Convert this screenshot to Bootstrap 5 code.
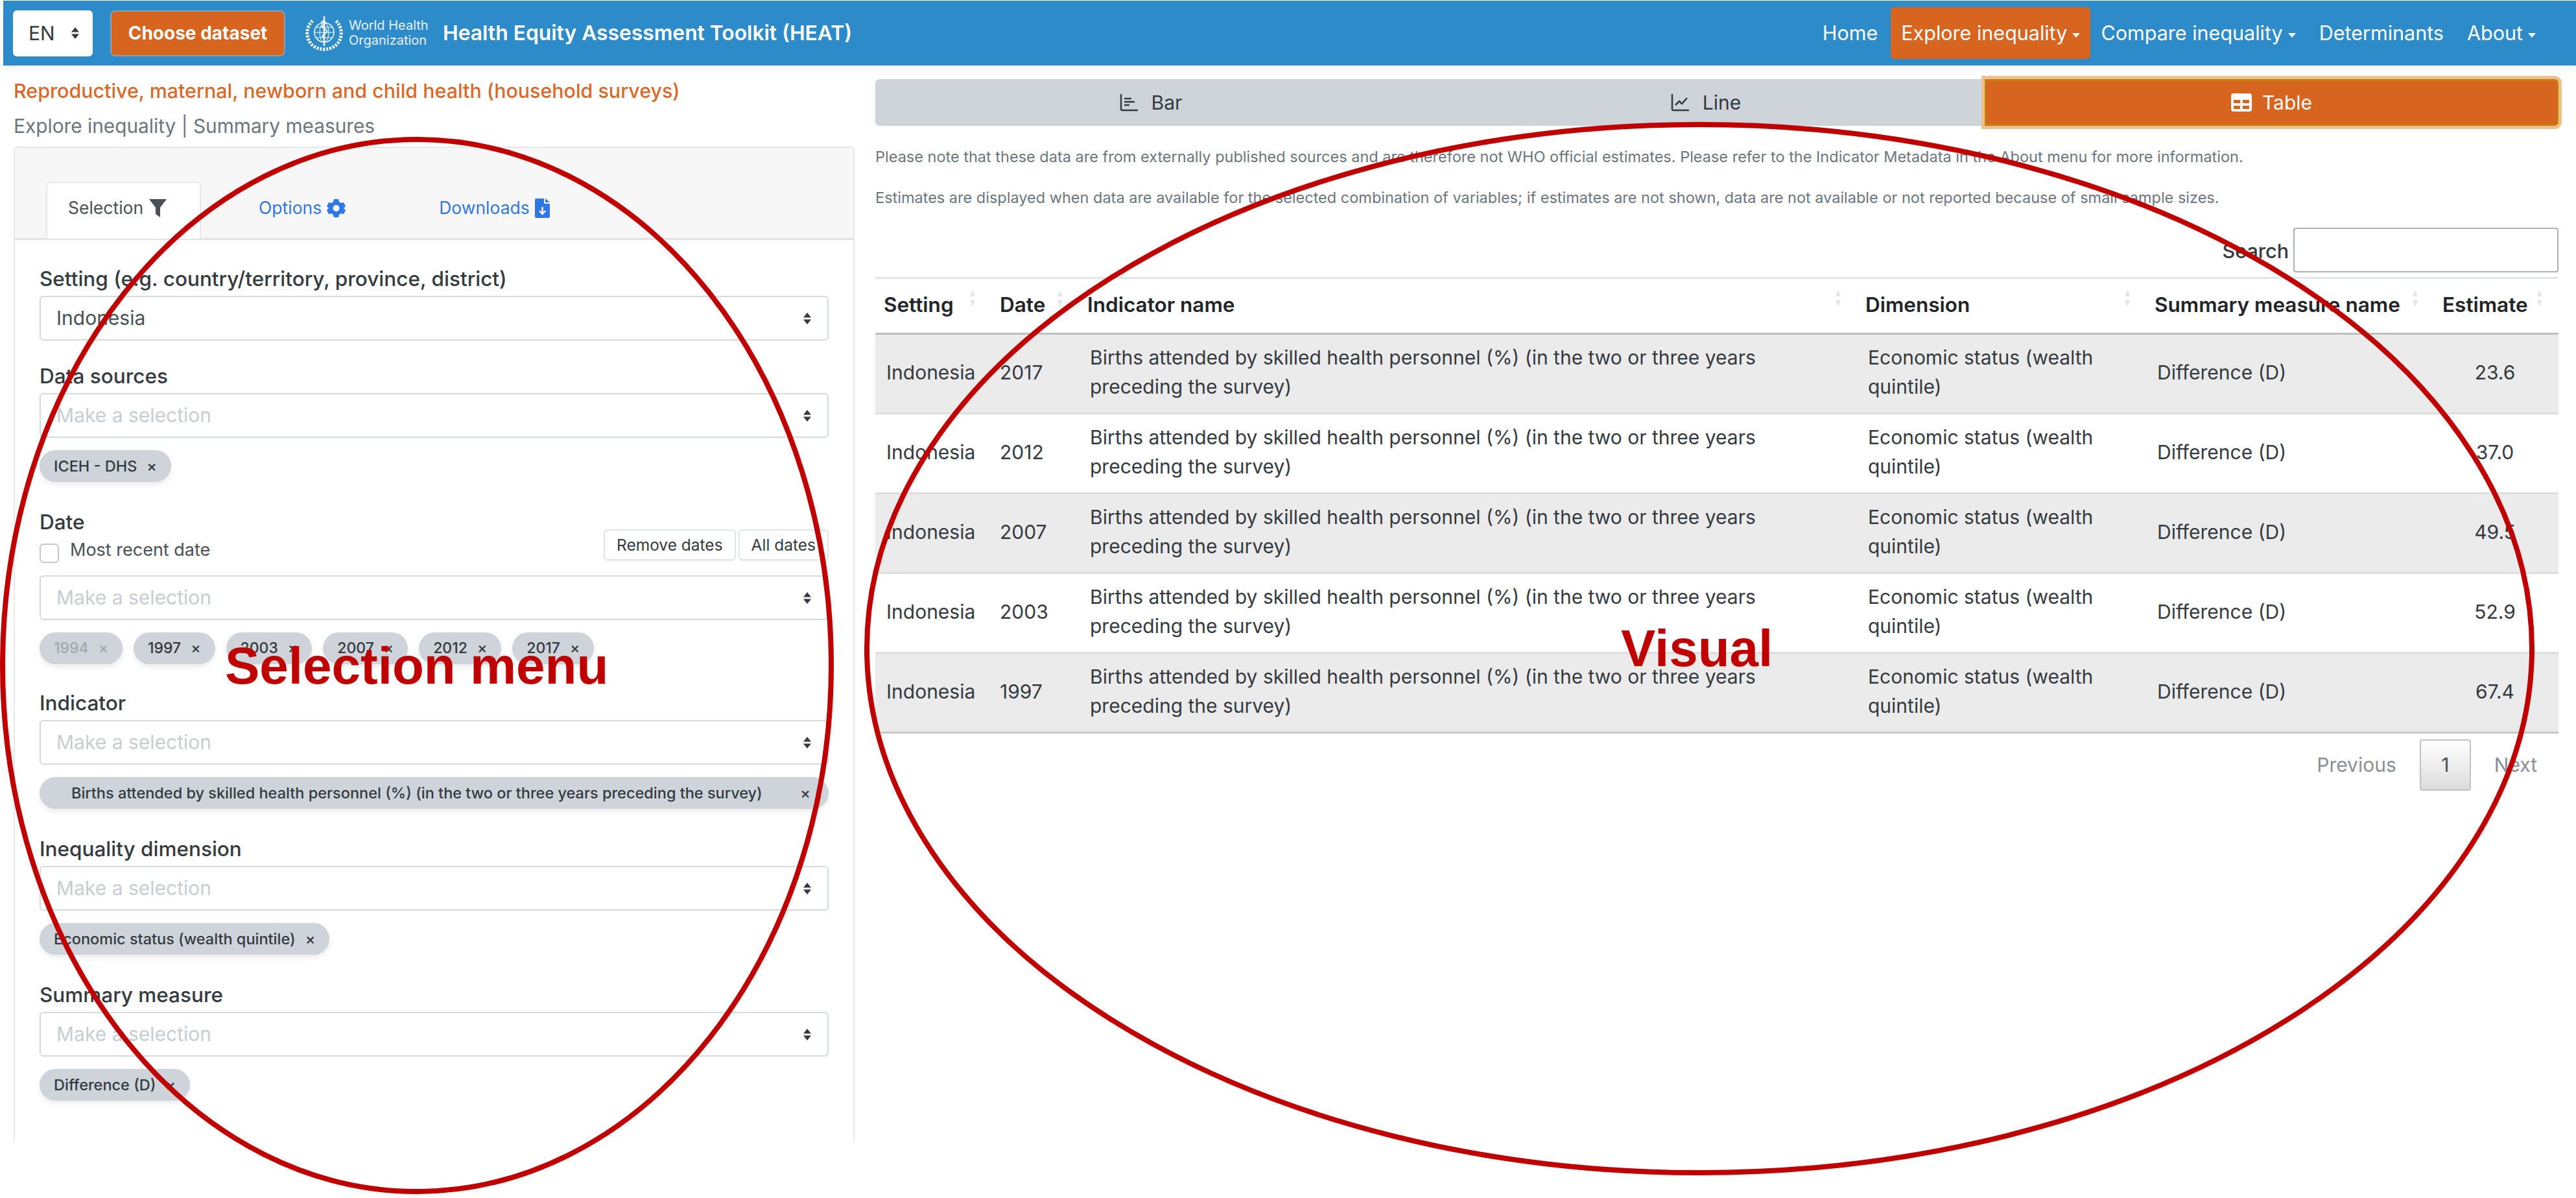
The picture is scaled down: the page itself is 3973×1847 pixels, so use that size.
<!DOCTYPE html>
<html lang="en">
<head>
  <meta charset="UTF-8">
  <title>Health Equity Assessment Toolkit (HEAT)</title>
  <link href="https://cdn.jsdelivr.net/npm/bootstrap@5.3.0/dist/css/bootstrap.min.css" rel="stylesheet">
  <style>
    html, body { height: 1847px; overflow: hidden; }
    body { position: relative; font-family: Inter, "Liberation Sans", sans-serif; font-size: 30px; color: #343a40; background: #fff; }

    /* top bar */
    .heat-bar { margin: 1px 0 0 5px; height: 100px; padding: 0 46px 0 15px; background: #2e8bc9; box-shadow: 0 4px 12px rgba(0,0,0,.07); }
    .lang-select { width: 123px; height: 71px; font-size: 30px; padding: 0 0 0 24px; border: 0; border-radius: 6px; color: #343a40; }
    .btn-dataset { width: 270px; height: 71px; margin-left: 27px; padding: 0; font-size: 28px; font-weight: 700; color: #fff; background: #d7641f; border: 2px solid #8fa0a8; border-radius: 8px; }
    .who-logo { width: 65px; height: 56px; margin-left: 28px; }
    .who-name { margin-left: 5px; width: 125px; font-size: 20px; line-height: 23px; color: #e6f1f8; }
    .heat-title { margin-left: 20px; font-size: 31.800px; font-weight: 600; color: #fff; }
    .navbar-expand.heat-bar .navbar-nav .nav-link { color: #fff; font-size: 30.500px; padding: 0 16px; height: 80px; line-height: 80px; border-radius: 6px; }
    .navbar-expand.heat-bar .navbar-nav .nav-link.active { background: #d7641f; color: #fff; }
    .heat-bar .dropdown-toggle::after { border-top: 7px solid; border-right: 6px solid transparent; border-left: 6px solid transparent; border-bottom: 0; margin-left: 8px; vertical-align: 4px; }

    /* left pane */
    .side-pane { width: 1340px; padding-left: 21px; padding-right: 22px; flex: none; }
    .data-title { margin-top: 20px; font-size: 30.400px; line-height: 39px; font-weight: 500; color: #d9692b; white-space: nowrap; }
    .data-sub { margin-top: 15px; font-size: 29.800px; line-height: 39px; color: #6c757d; }
    .pick-card { margin-top: 12px; border: 2px solid #e8e8e8; border-bottom: 0; border-radius: 6px 6px 0 0; }
    .pick-card .card-header { height: 142px; padding: 52px 0 0 48px; background: #f7f7f7; border-bottom: 3px solid #e2e3e5; }
    .pick-card .nav-tabs { margin: 0; border: 0; }
    .pick-card .nav-link { height: 88px; padding: 0 32px 8px; display: flex; align-items: center; gap: 8px; font-size: 26.500px; color: #2f77e6; border: 2px solid transparent; border-bottom: 0; }
    .pick-card .nav-link.active { padding-right: 50px; color: #495057; background: #fff; border-color: #e8e8e8; border-radius: 6px 6px 0 0; }
    .tab-gap-a { margin-left: 55px; }
    .tab-gap-b { margin-left: 76px; }
    .pick-card .card-body { padding: 40px 38px 64px 38px; }
    .fld { margin-bottom: 35px; }
    .fld-label { display: block; height: 40px; line-height: 40px; margin-bottom: 6px; font-size: 31.500px; font-weight: 500; color: #343a40; white-space: nowrap; }
    .heat-select { height: 69px; padding: 0 50px 0 24px; font-size: 30px; color: #495057; border: 2px solid #d5dae0; border-radius: 6px; background-size: 14px 20px; background-position: right 24px center;
      background-image: url("data:image/svg+xml,%3csvg xmlns='http://www.w3.org/2000/svg' viewBox='0 0 14 20'%3e%3cpath fill='%23343a40' d='M7 1l6 7.500H1zM7 19l-6-7.500h12z'/%3e%3c/svg%3e"); }
    .heat-select.is-empty { color: #c8cdd3; }
    .lang-select { background-size: 14px 20px; background-position: right 20px center; background-image: url("data:image/svg+xml,%3csvg xmlns='http://www.w3.org/2000/svg' viewBox='0 0 14 20'%3e%3cpath fill='%23343a40' d='M7 1l6 7.500H1zM7 19l-6-7.500h12z'/%3e%3c/svg%3e"); }
    .chip-row { display: flex; gap: 17px; margin-top: 19px; margin-bottom: 42px; }
    .chip-row.row-last { margin-bottom: 0; }
    .chip-row.row-dates { margin-bottom: 40px; }
    .chip-pill { display: inline-flex; align-items: center; justify-content: space-between; height: 49px; padding: 0 22px; gap: 15px; border-radius: 25px; background: #ced4da; font-size: 23.500px; font-weight: 500; color: #343a40; box-shadow: 0 4px 8px rgba(0,0,0,.08); white-space: nowrap; }
    .chip-pill.is-off { color: #a3a9af; }
    .row-dates .chip-pill { font-size: 23px; }
    .chip-wide { width: 100%; padding: 0 28px 0 49px; }
    .date-head { height: 96px; margin-bottom: 6px; }
    .recent-row { margin-top: 13px; }
    .form-check-input.recent-box { width: 30px; height: 30px; margin: 0; float: none; border: 2px solid #c2c8ce; border-radius: 6px; flex: none; }
    .recent-label { font-size: 27px; line-height: 30px; color: #495057; margin: -5px 0 0 17px; }
    .btn-dates { height: 48px; padding: 0 18px; font-size: 24.500px; color: #343a40; background: #fff; border: 2px solid #e2e5e8; border-radius: 6px; box-shadow: 0 2px 3px rgba(0,0,0,.05); margin-top: 31px; white-space: nowrap; }

    /* right pane */
    .main-pane { flex: 1; min-width: 0; margin-left: 10px; padding-right: 27px; padding-top: 21px; }
    .view-group { height: 72px; width: 100%; }
    .view-group .btn { font-size: 30px; color: #343a40; background: #ced4da; border: 0; display: flex; align-items: center; justify-content: center; gap: 20px; padding: 0; }
    .view-group .view-bar { flex: 0 0 851px; border-right: 1px solid #dde1e5; }
    .view-group .view-line { flex: 0 0 862px; }
    .view-group .view-table { flex: 1 1 0; gap: 16px; background: #d7641f; color: #fff; border: 3px solid #c87f0a; border-radius: 6px; box-shadow: 0 0 0 5px #edc08d; position: relative; z-index: 1; }
    .note-text { font-size: 23.500px; line-height: 30px; color: #6c757d; margin: 33px 0 0; white-space: nowrap; }
    .search-row { height: 69px; margin-top: 31px; }
    .search-row label { font-size: 30.500px; font-weight: 500; margin-right: 7px; margin-top: 3px; }
    .search-box { width: 409px; height: 69px; border: 2px solid #adb0b3; border-radius: 4px; padding: 0 10px; }
    .heat-table { table-layout: fixed; width: 100%; margin: 7px 0 0; border-top: 3px solid #e4e7ea; font-size: 30px; color: #343a40; }
    .heat-table th { height: 86px; padding: 0 0 4px 13px; vertical-align: middle; font-size: 31.500px; font-weight: 600; color: #212529; border-bottom: 3px solid #bdbfc1; white-space: nowrap; }
    .heat-table td { height: 123px; padding: 0 10px 4px 17px; line-height: 45px; vertical-align: middle; border-bottom: 3px solid #dedede; border-top: 0; }
    .heat-table tbody tr:nth-child(odd) td { background: #ebebeb; }
    .heat-table tbody tr:last-child td { border-bottom-color: #c8c8c8; }
    .heat-table td.cell-date { padding-left: 13px; }
    .heat-table td.cell-num { text-align: center; padding-left: 0; padding-right: 4px; }
    .sort-mark { width: 10px; height: 28px; flex: none; }
    .pager-row { margin-top: 9px; height: 79px; padding-right: 33px; }
    .pager-text { font-size: 30px; color: #8b8f93; }
    .pager-one { width: 79px; height: 79px; margin: 0 36px; border: 2px solid #bfc1c3; border-radius: 4px; background: linear-gradient(#fff, #dcdcdc); font-size: 30px; color: #495057; }

    /* hand-drawn annotations lying over the screenshot */
    .mark-layer { position: absolute; left: 0; top: 0; width: 3973px; height: 1847px; pointer-events: none; }
    .mark-word { position: absolute; font-family: "Liberation Sans", Arial, sans-serif; font-weight: 700; font-size: 80px; line-height: 80px; color: #c00000; pointer-events: none; white-space: nowrap; }
    .mark-left { left: 347px; top: 987px; }
    .mark-right { left: 2500px; top: 960px; }
  </style>
</head>
<body>

  <nav class="navbar navbar-expand heat-bar">
    <div class="d-flex align-items-center flex-grow-1">
      <select class="form-select lang-select"><option>EN</option></select>
      <button type="button" class="btn btn-dataset">Choose dataset</button>
      <svg class="who-logo" viewBox="0 0 65 56" fill="none" stroke="#fff">
        <circle cx="32" cy="27" r="15" stroke-width="1.5"/>
        <ellipse cx="32" cy="27" rx="7" ry="15" stroke-width="1"/>
        <path d="M17 27h30M20 19h24M20 35h24" stroke-width="1"/>
        <path d="M32 2v46" stroke-width="2.4"/>
        <path d="M27 11c5-3 9 0 5 3s-5 5 0 7 6 5 1 8-5 5 0 6" stroke-width="1.8"/>
        <path d="M14 9c-9 8-12 24-2 36 5 5 12 8 20 8 8 0 15-3 20-8 10-12 7-28-2-36" stroke-width="5" stroke-dasharray="3 2"/>
      </svg>
      <div class="who-name">World Health Organization</div>
      <span class="heat-title">Health Equity Assessment Toolkit (HEAT)</span>
    </div>
    <ul class="navbar-nav align-items-center">
      <li class="nav-item"><a class="nav-link" href="#">Home</a></li>
      <li class="nav-item ms-1"><a class="nav-link active dropdown-toggle" href="#">Explore inequality</a></li>
      <li class="nav-item"><a class="nav-link dropdown-toggle" href="#">Compare inequality</a></li>
      <li class="nav-item ms-1"><a class="nav-link" href="#">Determinants</a></li>
      <li class="nav-item ms-1"><a class="nav-link dropdown-toggle" href="#">About</a></li>
    </ul>
  </nav>

  <div class="d-flex">
    <div class="side-pane">
      <div class="data-title">Reproductive, maternal, newborn and child health (household surveys)</div>
      <div class="data-sub">Explore inequality | Summary measures</div>

      <div class="card pick-card">
        <div class="card-header">
          <ul class="nav nav-tabs">
            <li class="nav-item">
              <a class="nav-link active" href="#">Selection
                <svg width="29" height="30" viewBox="0 0 29 30"><path fill="#495057" d="M1 1h27L18 14v15l-7-5V14z"/></svg>
              </a>
            </li>
            <li class="nav-item tab-gap-a">
              <a class="nav-link" href="#">Options
                <svg width="29" height="30" viewBox="0 0 29 30"><path fill="#2f77e6" fill-rule="evenodd" d="M11 1h7l1 4 3 2 4-1 3 6-3 3 3 3-3 6-4-1-3 2-1 4h-7l-1-4-3-2-4 1-3-6 3-3-3-3 3-6 4 1 3-2zM14.500 10a5 5 0 1 0 .01 0z"/></svg>
              </a>
            </li>
            <li class="nav-item tab-gap-b">
              <a class="nav-link" href="#">Downloads
                <svg width="23" height="30" viewBox="0 0 23 30"><path fill="#2f77e6" d="M2 0h12v8h9v20a2 2 0 0 1-2 2H2a2 2 0 0 1-2-2V2a2 2 0 0 1 2-2zM16 0l7 6h-7z"/><path fill="none" stroke="#fff" stroke-width="2.500" d="M11.500 13v10M7 19l4.500 5 4.500-5"/></svg>
              </a>
            </li>
          </ul>
        </div>
        <div class="card-body">
          <div class="fld">
            <label class="fld-label">Setting (e.g. country/territory, province, district)</label>
            <select class="form-select heat-select"><option>Indonesia</option></select>
          </div>
          <div>
            <label class="fld-label">Data sources</label>
            <select class="form-select heat-select is-empty"><option>Make a selection</option></select>
            <div class="chip-row"><span class="chip-pill">ICEH - DHS <span>×</span></span></div>
          </div>
          <div>
            <div class="d-flex justify-content-between align-items-start date-head">
              <div>
                <label class="fld-label mb-0">Date</label>
                <div class="d-flex align-items-start recent-row">
                  <input class="form-check-input recent-box" type="checkbox" id="recentDate">
                  <label class="recent-label" for="recentDate">Most recent date</label>
                </div>
              </div>
              <div class="d-flex gap-1">
                <button type="button" class="btn btn-dates">Remove dates</button>
                <button type="button" class="btn btn-dates">All dates</button>
              </div>
            </div>
            <select class="form-select heat-select is-empty"><option>Make a selection</option></select>
            <div class="chip-row row-dates">
              <span class="chip-pill is-off">1994 <span>×</span></span>
              <span class="chip-pill">1997 <span>×</span></span>
              <span class="chip-pill">2003 <span>×</span></span>
              <span class="chip-pill">2007 <span>×</span></span>
              <span class="chip-pill">2012 <span>×</span></span>
              <span class="chip-pill">2017 <span>×</span></span>
            </div>
          </div>
          <div>
            <label class="fld-label">Indicator</label>
            <select class="form-select heat-select is-empty"><option>Make a selection</option></select>
            <div class="chip-row"><span class="chip-pill chip-wide">Births attended by skilled health personnel (%) (in the two or three years preceding the survey) <span>×</span></span></div>
          </div>
          <div>
            <label class="fld-label">Inequality dimension</label>
            <select class="form-select heat-select is-empty"><option>Make a selection</option></select>
            <div class="chip-row"><span class="chip-pill">Economic status (wealth quintile) <span>×</span></span></div>
          </div>
          <div>
            <label class="fld-label">Summary measure</label>
            <select class="form-select heat-select is-empty"><option>Make a selection</option></select>
            <div class="chip-row row-last"><span class="chip-pill">Difference (D) <span>×</span></span></div>
          </div>
        </div>
      </div>
    </div>

    <div class="main-pane">
      <div class="btn-group view-group">
        <button type="button" class="btn view-bar">
          <svg width="29" height="28" viewBox="0 0 29 28" fill="none" stroke="#343a40" stroke-width="2.500"><path d="M2 1v23a2 2 0 0 0 2 2h24"/><path d="M7 8h11M7 13h16M7 18h8"/></svg>
          Bar
        </button>
        <button type="button" class="btn view-line">
          <svg width="29" height="28" viewBox="0 0 29 28" fill="none" stroke="#343a40" stroke-width="2.500"><path d="M2 1v23a2 2 0 0 0 2 2h24"/><path d="M7 18l6-6 4 4 8-9"/></svg>
          Line
        </button>
        <button type="button" class="btn view-table">
          <svg width="32" height="28" viewBox="0 0 32 28"><path fill="#fff" fill-rule="evenodd" d="M4 0h24a4 4 0 0 1 4 4v20a4 4 0 0 1-4 4H4a4 4 0 0 1-4-4V4a4 4 0 0 1 4-4zM4 10v5h10v-5zM18 10v5h10v-5zM4 19v5h10v-5zM18 19v5h10v-5z"/></svg>
          Table
        </button>
      </div>

      <p class="note-text">Please note that these data are from externally published sources and are therefore not WHO official estimates. Please refer to the Indicator Metadata in the About menu for more information.</p>
      <p class="note-text">Estimates are displayed when data are available for the selected combination of variables; if estimates are not shown, data are not available or not reported because of small sample sizes.</p>

      <div class="d-flex justify-content-end align-items-center search-row">
        <label for="tableSearch">Search</label>
        <input class="search-box" id="tableSearch" type="search">
      </div>

      <table class="table heat-table" id="heatTable">
        <colgroup>
          <col style="width:179px"><col style="width:135px"><col style="width:1200px"><col style="width:446px"><col style="width:444px"><col>
        </colgroup>
        <thead>
          <tr id="heatHead"></tr>
        </thead>
        <tbody id="heatBody"></tbody>
      </table>

      <div class="d-flex justify-content-end align-items-center pager-row">
        <span class="pager-text">Previous</span>
        <span class="pager-one d-flex align-items-center justify-content-center">1</span>
        <span class="pager-text">Next</span>
      </div>
    </div>
  </div>

  <svg class="mark-layer" viewBox="0 0 3973 1847" fill="none" stroke="#c00000" stroke-width="8">
    <ellipse cx="643" cy="1026" rx="639" ry="811"/>
    <ellipse cx="2621" cy="1000" rx="1284" ry="808"/>
  </svg>
  <div class="mark-word mark-left">Selection menu</div>
  <div class="mark-word mark-right">Visual</div>

  <script>
    const heads = ['Setting', 'Date', 'Indicator name', 'Dimension', 'Summary measure name', 'Estimate'];
    const years = [['2017', '23.6'], ['2012', '37.0'], ['2007', '49.5'], ['2003', '52.9'], ['1997', '67.4']];
    const sortIcon = '<svg class="sort-mark" viewBox="0 0 10 28"><path fill="#e3e5e7" d="M5 1l4 10H1zM5 27L1 17h8z"/></svg>';

    document.getElementById('heatHead').innerHTML = heads.map(h =>
      '<th><div class="d-flex justify-content-between pe-4">' + h + sortIcon + '</div></th>').join('');

    document.getElementById('heatBody').innerHTML = years.map(y => '<tr>' +
      '<td>Indonesia</td>' +
      '<td class="cell-date">' + y[0] + '</td>' +
      '<td>Births attended by skilled health personnel (%) (in the two or three years preceding the survey)</td>' +
      '<td>Economic status (wealth quintile)</td>' +
      '<td>Difference (D)</td>' +
      '<td class="cell-num">' + y[1] + '</td>' +
      '</tr>').join('');
  </script>

</body>
</html>
